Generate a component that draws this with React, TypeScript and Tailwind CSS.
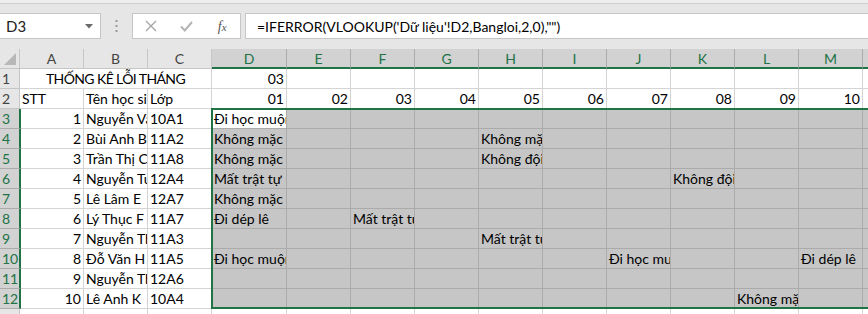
import React from "react";

const FONT = { fontFamily: "Lato, 'Noto Sans', sans-serif" };

const COLW = [
  "w-[64px]", "w-[64px]", "w-[64px]", "w-[75px]",
  "w-[64px]", "w-[64px]", "w-[64px]", "w-[64px]", "w-[64px]",
  "w-[64px]", "w-[64px]", "w-[64px]", "w-[64px]", "w-[64px]",
];
const LETTERS = ["A", "B", "C", "D", "E", "F", "G", "H", "I", "J", "K", "L", "M", "N"];

type Row = { a: string; b: string; c: string; v: string[] };

const E = "";
const rows: Row[] = [
  { a: "1", b: "Nguyễn Văn A", c: "10A1", v: ["Đi học muộn", E, E, E, E, E, E, E, E, E] },
  { a: "2", b: "Bùi Anh B", c: "11A2", v: ["Không mặc đồng phục", E, E, E, "Không mặc đồng phục", E, E, E, E, E] },
  { a: "3", b: "Trần Thị C", c: "11A8", v: ["Không mặc đồng phục", E, E, E, "Không đội mũ bảo hiểm", E, E, E, E, E] },
  { a: "4", b: "Nguyễn Tuấn D", c: "12A4", v: ["Mất trật tự", E, E, E, E, E, E, "Không đội mũ bảo hiểm", E, E] },
  { a: "5", b: "Lê Lâm E", c: "12A7", v: ["Không mặc đồng phục", E, E, E, E, E, E, E, E, E] },
  { a: "6", b: "Lý Thục F", c: "11A7", v: ["Đi dép lê", E, "Mất trật tự", E, E, E, E, E, E, E] },
  { a: "7", b: "Nguyễn Thị G", c: "11A3", v: [E, E, E, E, "Mất trật tự", E, E, E, E, E] },
  { a: "8", b: "Đỗ Văn H", c: "11A5", v: ["Đi học muộn", E, E, E, E, E, "Đi học muộn", E, E, "Đi dép lê"] },
  { a: "9", b: "Nguyễn Thị I", c: "12A6", v: [E, E, E, E, E, E, E, E, E, E] },
  { a: "10", b: "Lê Anh K", c: "10A4", v: [E, E, E, E, E, E, E, E, "Không mặc đồng phục", E] },
];

function RowHeader({ n, sel }: { n: number; sel: boolean }) {
  return (
    <div
      className={
        sel
          ? "w-[21px] shrink-0 h-[20px] border-b border-r-2 border-b-[#ababab] border-r-[#217346] bg-[#d2d2d2] text-[#217346] text-[14px] leading-[19px] pl-[2px]"
          : "w-[20px] shrink-0 h-[20px] border-b border-r border-[#c6c6c6] bg-[#e6e6e6] text-[#444] text-[14px] leading-[19px] pl-[2px]"
      }
    >
      {n}
    </div>
  );
}

function Cell({
  w,
  text,
  right,
  sel,
  active,
}: {
  w: string;
  text?: string;
  right?: boolean;
  sel?: boolean;
  active?: boolean;
}) {
  const bg = active ? "bg-white border-[#ababab]" : sel ? "bg-[#c6c6c6] border-[#ababab]" : "bg-white border-[#d4d4d4]";
  return (
    <div
      className={`${w} shrink-0 h-[20px] border-r border-b ${bg} overflow-hidden whitespace-nowrap text-[14px] leading-[20px] text-black ${
        right ? "text-right pr-[2px]" : "text-left pl-[2px]"
      }`}
    >
      {text}
    </div>
  );
}

export default function App() {
  return (
    <div className="w-[868px] h-[314px] overflow-hidden bg-white relative" style={FONT}>
      {/* Formula bar area */}
      <div className="h-[49px] bg-[#e6e6e6] flex flex-col">
        <div className="h-[4px] bg-[#eeeeee] border-b border-[#d0d0d0]" />
        <div className="h-[9px]" />
        <div className="flex items-center h-[26px]">
          <div className="w-[101px] h-[26px] bg-white border border-l-0 border-[#c6c6c6] flex items-center justify-between pl-[6px] pr-[7px]">
            <span className="text-[15px] text-[#222]">D3</span>
            <svg width="8" height="5" viewBox="0 0 8 5">
              <path d="M0 0 H8 L4 4.5 Z" fill="#6a6a6a" />
            </svg>
          </div>
          <div className="w-[31px] flex justify-center">
            <svg width="3" height="12" viewBox="0 0 3 12">
              <rect x="0.5" y="0" width="2" height="2" fill="#9a9a9a" />
              <rect x="0.5" y="5" width="2" height="2" fill="#9a9a9a" />
              <rect x="0.5" y="10" width="2" height="2" fill="#9a9a9a" />
            </svg>
          </div>
          <div className="w-[109px] h-[26px] bg-white border border-[#c6c6c6] flex items-center">
            <div className="w-[36px] flex justify-center">
              <svg width="12" height="12" viewBox="0 0 12 12">
                <path d="M1 1 L11 11 M11 1 L1 11" stroke="#a6a6a6" strokeWidth="1.4" />
              </svg>
            </div>
            <div className="w-[36px] flex justify-center">
              <svg width="13" height="11" viewBox="0 0 13 11">
                <path d="M1 5.5 L4.8 9.5 L12 1" stroke="#b4b4b4" strokeWidth="2" fill="none" />
              </svg>
            </div>
            <div className="w-[36px] flex justify-center">
              <span
                className="text-[14px] italic text-[#555]"
                style={{ fontFamily: "'Liberation Serif', 'DejaVu Serif', serif" }}
              >
                f<span className="text-[11px]">x</span>
              </span>
            </div>
          </div>
          <div className="w-[4px]" />
          <div className="flex-1 h-[26px] bg-white border border-r-0 border-[#c6c6c6] flex items-center pl-[11px]">
            <span className="text-[14px] text-black whitespace-nowrap">
              =IFERROR(VLOOKUP('Dữ liệu'!D2,Bangloi,2,0),"")
            </span>
          </div>
        </div>
        <div className="flex-1" />
      </div>

      {/* Column header row */}
      <div className="flex h-[20px]">
        <div className="w-[20px] shrink-0 h-[20px] bg-[#e6e6e6] border-r border-b border-[#c6c6c6] relative">
          <svg className="absolute right-[3px] bottom-[3px]" width="12" height="12" viewBox="0 0 12 12">
            <path d="M12 0 V12 H0 Z" fill="#b7b7b7" />
          </svg>
        </div>
        {LETTERS.map((L, i) =>
          i >= 3 ? (
            <div
              key={L}
              className={`${COLW[i]} shrink-0 h-[20px] bg-[#d2d2d2] border-r border-r-[#ababab] border-b-2 border-b-[#217346] text-center text-[14px] leading-[19px] text-[#217346]`}
            >
              {L}
            </div>
          ) : (
            <div
              key={L}
              className={`${COLW[i]} shrink-0 h-[20px] bg-[#e6e6e6] border-r border-b border-[#c6c6c6] text-center text-[14px] leading-[19px] text-[#444]`}
            >
              {L}
            </div>
          )
        )}
      </div>

      {/* Row 1 */}
      <div className="flex">
        <RowHeader n={1} sel={false} />
        <div className="w-[192px] shrink-0 h-[20px] border-r border-b border-[#d4d4d4] text-center text-[14px] leading-[20px] tracking-[-0.6px] whitespace-nowrap">
          THỐNG KÊ LỖI THÁNG
        </div>
        <Cell w={COLW[3]} text="03" right />
        {COLW.slice(4).map((w, i) => (
          <Cell key={i} w={w} />
        ))}
      </div>

      {/* Row 2 */}
      <div className="flex">
        <RowHeader n={2} sel={false} />
        <Cell w={COLW[0]} text="STT" />
        <Cell w={COLW[1]} text="Tên học sinh" />
        <Cell w={COLW[2]} text="Lớp" />
        {COLW.slice(3, 13).map((w, i) => (
          <Cell key={i} w={w} text={String(i + 1).padStart(2, "0")} right />
        ))}
        <Cell w={COLW[13]} />
      </div>

      {/* Data rows */}
      {rows.map((r, ri) => (
        <div className="flex" key={ri}>
          <RowHeader n={ri + 3} sel />
          <Cell w="w-[63px]" text={r.a} right />
          <Cell w={COLW[1]} text={r.b} />
          <Cell w={COLW[2]} text={r.c} />
          {r.v.map((t, ci) => (
            <Cell key={ci} w={COLW[3 + ci]} text={t} sel active={ri === 0 && ci === 0} />
          ))}
          <Cell w={COLW[13]} sel />
        </div>
      ))}

      {/* Row 13 */}
      <div className="flex">
        <RowHeader n={13} sel={false} />
        {COLW.map((w, i) => (
          <Cell key={i} w={w} />
        ))}
      </div>

      {/* Selection outline */}
      <div className="absolute left-[211px] top-[108px] w-[700px] h-[201px] border-2 border-[#217346] pointer-events-none" />
    </div>
  );
}
